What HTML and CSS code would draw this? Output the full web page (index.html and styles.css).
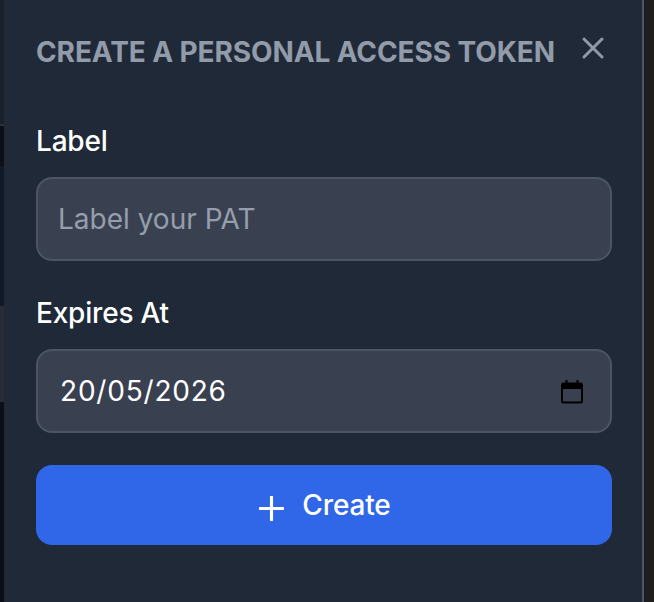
FILE: index.html
```html
<!DOCTYPE html>
<html lang="en">
<head>
<meta charset="utf-8">
<title>Create a personal access token</title>
<link rel="stylesheet" href="styles.css">
</head>
<body>
<div class="page">
  <div class="backdrop">
    <div class="band band-a"></div>
    <div class="band band-line"></div>
    <div class="band band-b"></div>
    <div class="band band-c"></div>
    <div class="band band-d"></div>
    <div class="band band-e"></div>
  </div>
  <section class="panel">
    <header class="head">
      <h2 class="title">CREATE A PERSONAL ACCESS TOKEN</h2>
      <button class="close" type="button" aria-label="Close">
        <svg viewBox="0 0 24 24" width="24" height="24" fill="none" stroke="#8f99a8" stroke-width="3" stroke-linecap="round"><path d="M3 3 21 21M21 3 3 21"/></svg>
      </button>
    </header>
    <form class="form">
      <label class="label" for="pat-label">Label</label>
      <input class="field" id="pat-label" type="text" placeholder="Label your PAT">
      <label class="label label-second" for="pat-date">Expires At</label>
      <div class="field date-field">
        <input class="date-input" id="pat-date" type="text" value="20/05/2026">
        <svg class="calendar" viewBox="0 0 24 24" width="24" height="26" fill="none"><path d="M3.500 4.500h17a1.500 1.500 0 0 1 1.500 1.500v16a1.500 1.500 0 0 1-1.500 1.500h-17A1.500 1.500 0 0 1 2 22V6a1.500 1.500 0 0 1 1.500-1.500Z" stroke="#000" stroke-width="2"/><path d="M2 5h20v5H2Z" fill="#000"/><path d="M6.500 1v4M17.500 1v4" stroke="#000" stroke-width="2"/></svg>
      </div>
      <button class="submit" type="button">
        <svg viewBox="0 0 24 24" width="25" height="25" fill="none" stroke="#fff" stroke-width="3" stroke-linecap="round"><path d="M12 1v22M1 12h22"/></svg>
        <span>Create</span>
      </button>
    </form>
  </section>
  <div class="gutter"></div>
</div>
</body>
</html>
```
FILE: styles.css
```css
* { box-sizing: border-box; }
html, body { margin: 0; height: 100%; }
body {
  background: #1e1e1e;
  font-family: Inter, "Liberation Sans", sans-serif;
  overflow: hidden;
}
.page {
  display: flex;
  width: 654px;
  height: 602px;
}
.backdrop {
  width: 4px;
  display: flex;
  flex-direction: column;
  flex: none;
}
.band-a { height: 124px; background: #1a202c; }
.band-line { height: 2px; background: #2a303c; }
.band-b { height: 40px; background: #0b0f19; }
.band-c { height: 140px; background: #131a27; }
.band-d { height: 96px; background: #282c38; }
.band-e { flex: 1; background: #0a0e18; }
.panel {
  width: 640px;
  flex: none;
  background: #202937;
  border-right: 2px solid #4b5563;
  padding: 24px 30px 0 32px;
}
.head {
  display: flex;
  justify-content: space-between;
  align-items: flex-start;
  height: 75px;
}
.title {
  margin: 10px 0 0;
  font-size: 28px;
  line-height: 36px;
  font-weight: 650;
  letter-spacing: -0.1px;
  color: #929ba9;
  white-space: nowrap;
}
.close {
  background: none;
  border: 0;
  padding: 0;
  margin: 12px 7px 0 0;
  width: 24px;
  height: 24px;
  display: block;
}
.close svg { display: block; }
.form { display: flex; flex-direction: column; }
.label {
  display: block;
  color: #fff;
  font-size: 28px;
  line-height: 36px;
  font-weight: 450;
  letter-spacing: -0.2px;
  margin: 24px 0 18px;
}
.label-second { margin-top: 34px; }
.field {
  width: 576px;
  height: 84px;
  background: #394151;
  border: 2px solid #4b5563;
  border-radius: 16px;
  color: #fff;
  font: 400 28px Inter, "Liberation Sans", sans-serif;
  padding: 0 20px;
  outline: none;
}
.field::placeholder { color: #959eac; opacity: 1; }
.date-field {
  display: flex;
  align-items: center;
  justify-content: space-between;
  padding: 0 26px 0 22px;
}
.date-input {
  background: none;
  border: 0;
  padding: 0;
  color: #fff;
  font: inherit;
  letter-spacing: 0.8px;
  width: 300px;
  outline: none;
}
.calendar { display: block; flex: none; }
.submit {
  margin-top: 32px;
  width: 576px;
  height: 80px;
  background: #2f67e8;
  border: 0;
  border-radius: 16px;
  color: #fff;
  font: 450 28px Inter, "Liberation Sans", sans-serif;
  letter-spacing: -0.15px;
  display: flex;
  align-items: center;
  justify-content: center;
  gap: 18px;
  padding-left: 8px;
}
.submit svg { display: block; margin-top: 6px; }
.gutter { flex: 1; background: #1e1e1e; }
```
